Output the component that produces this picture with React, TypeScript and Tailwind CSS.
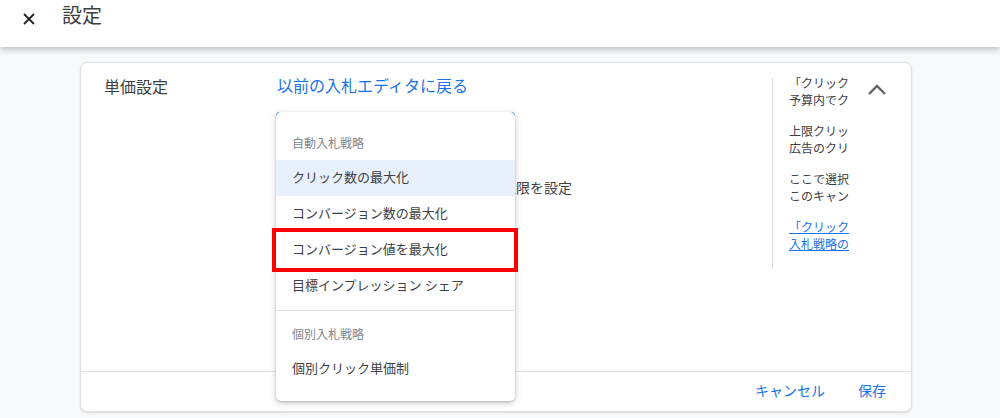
import React from "react";

export default function App() {
  return (
    <div className="w-[1000px] h-[418px] bg-[#f8f9fa] overflow-hidden font-['Roboto','Noto_Sans_CJK_JP',sans-serif] text-[#3c4043]">
      <header className="relative z-10 h-[47px] bg-white flex items-start shadow-[0_3px_6px_rgba(0,0,0,0.22)]">
        <svg className="ml-[23px] mt-[13px]" width="12" height="12" viewBox="0 0 12 12">
          <path d="M1 1L11 11M11 1L1 11" stroke="#202124" strokeWidth="1.8" />
        </svg>
        <span className="ml-[27px] mt-[2px] text-[20px] leading-[28px] text-[#3c4043]">設定</span>
      </header>

      <div className="pt-[15px] pl-[80px]">
        <div className="w-[832px] h-[350px] bg-white rounded-[7px] border border-[#e0e0e0] shadow-[0_1px_2px_rgba(60,64,67,0.15)] flex flex-col">
          <div className="flex h-[308px]">
            <div className="w-[196px] pl-[23px] pt-[13px] text-[16px] leading-[24px] text-[#3c4043]">単価設定</div>

            <div className="w-[495px] pt-[12px]">
              <div className="text-[16px] leading-[24px] text-[#1a73e8]">以前の入札エディタに戻る</div>
              <div className="relative mt-[13px] -ml-[1px] w-[239px] h-[40px] rounded-[4px] border-2 border-[#1a73e8]">
                <div className="absolute -top-[2px] -left-[2px] z-20 w-[239px] bg-white rounded-[5px] shadow-[0_2px_6px_rgba(60,64,67,0.28),0_1px_2px_rgba(60,64,67,0.2)] pt-[16px] pb-[14px]">
                  <div className="h-[32px] px-[16px] flex items-center text-[12px] text-[#80868b]">自動入札戦略</div>
                  <div className="h-[36px] px-[16px] flex items-center text-[13px] text-[#3c4043] bg-[#e8f0fe]">クリック数の最大化</div>
                  <div className="h-[36px] px-[16px] flex items-center text-[13px] text-[#3c4043]">コンバージョン数の最大化</div>
                  <div className="relative h-[36px] px-[16px] flex items-center text-[13px] text-[#3c4043]">
                    コンバージョン値を最大化
                    <span className="absolute -left-[4px] -right-[3px] -top-[4px] -bottom-[4px] border-4 border-[#ff0000]" />
                  </div>
                  <div className="h-[36px] px-[16px] flex items-center text-[13px] text-[#3c4043]">目標インプレッション シェア</div>
                  <div className="mt-[6px] h-px bg-[#e0e0e0]" />
                  <div className="mt-[8px] h-[32px] px-[16px] flex items-center text-[12px] text-[#80868b]">個別入札戦略</div>
                  <div className="h-[36px] px-[16px] flex items-center text-[13px] text-[#3c4043]">個別クリック単価制</div>
                </div>
              </div>
              <div className="mt-[22px] w-[295px] h-[28px] flex items-center justify-end text-[14px] text-[#3c4043]">
                上限を設定
              </div>
            </div>

            <div className="w-px h-[190px] mt-[15px] bg-[#dadce0]" />
            <div className="w-[78px] pl-[16px] pt-[13px] text-[12px] leading-[17px] text-[#3c4043]">
              <div className="w-[62px] overflow-hidden whitespace-nowrap mb-[14px]">
                <div>「クリック</div>
                <div>予算内でク</div>
              </div>
              <div className="w-[62px] overflow-hidden whitespace-nowrap mb-[14px]">
                <div>上限クリッ</div>
                <div>広告のクリ</div>
              </div>
              <div className="w-[62px] overflow-hidden whitespace-nowrap mb-[14px]">
                <div>ここで選択</div>
                <div>このキャン</div>
              </div>
              <div className="w-[62px] overflow-hidden whitespace-nowrap text-[#1a73e8] underline">
                <div>「クリック</div>
                <div>入札戦略の</div>
              </div>
            </div>
            <svg className="ml-[14px] mt-[15px]" width="24" height="24" viewBox="0 0 24 24">
              <polyline points="4,16 12,8 20,16" fill="none" stroke="#5f6368" strokeWidth="2.4" />
            </svg>
          </div>

          <div className="flex-1 border-t border-[#e0e0e0] flex items-center justify-end pr-[25px] gap-[33px] text-[14px] text-[#1a73e8]">
            <span>キャンセル</span>
            <span>保存</span>
          </div>
        </div>
      </div>
    </div>
  );
}
